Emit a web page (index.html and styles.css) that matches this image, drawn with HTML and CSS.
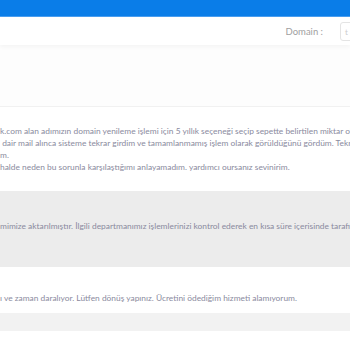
FILE: index.html
```html
<!DOCTYPE html>
<html lang="tr">
<head>
  <meta charset="UTF-8" />
  <meta name="viewport" content="width=device-width, initial-scale=1.0">
  <title>Destek Talebi</title>
  <link rel="stylesheet" href="styles.css">
</head>
<body>

<div class="topbar"></div>

<!-- Üst menü -->
<div class="header">
  <span class="label">Domain :</span>
  <div class="select">t</div>
</div>

<div class="intro"></div>

<!-- Mesajlar -->
<div class="messages">
  <div class="msg">
    <p>k.com alan adımızın domain yenileme işlemi için 5 yıllık seçeneği seçip sepette belirtilen miktar olarak ödeme yaptım.<br>
    &nbsp;dair mail alınca sisteme tekrar girdim ve tamamlanmamış işlem olarak görüldüğünü gördüm. Tekrar ödeme yapmam istendi.<br>
    m.<br>
    halde neden bu sorunla karşılaştığımı anlayamadım. yardımcı oursanız sevinirim.</p>
  </div>
  <div class="msg reply">
    <p>mimize aktarılmıştır. İlgili departmanımız işlemlerinizi kontrol ederek en kısa süre içerisinde tarafınıza dönüş yapacaktır.</p>
  </div>
  <div class="msg late">
    <p>ı ve zaman daralıyor. Lütfen dönüş yapınız. Ücretini ödediğim hizmeti alamıyorum.</p>
  </div>
  <div class="msg reply small"></div>
</div>

</body>
</html>
```

FILE: styles.css
```css
html, body {
  margin: 0;
  padding: 0;
  height: 100%;
  overflow: hidden;
  background: #fff;
  font-family: 'Lato', sans-serif;
}

.topbar {
  height: 16px;
  background: #0a7de8;
  border-bottom: 1px solid #4a9ef0;
}

.header {
  display: flex;
  align-items: center;
  justify-content: flex-end;
  gap: 17px;
  height: 28px;
  background: #fff;
  box-shadow: 0 2px 4px rgba(0,0,0,0.04);
  position: relative;
  overflow: hidden;
}

.label {
  font-size: 9.5px;
  color: #a0a0a0;
}

.select {
  flex-shrink: 0;
  width: 40px;
  height: 19px;
  margin-right: -30px;
  border: 1px solid #e4e4e4;
  border-radius: 3px;
  font-size: 8px;
  color: #ccc;
  padding-left: 4px;
  line-height: 18px;
  box-sizing: border-box;
}

.intro {
  height: 61px;
  background: #fdfdfd;
  border-bottom: 1px solid #f1f1f1;
}

.msg {
  padding: 18px 0;
  overflow: hidden;
}

.msg p {
  margin: 0;
  white-space: nowrap;
  font-size: 8.4px;
  line-height: 12px;
  color: #8a8a9e;
}

.reply {
  background: #ececec;
  padding: 29px 0;
  height: 18px;
}

.late {
  padding: 25px 0 9px;
}

.reply.small {
  background: #f2f2f2;
  height: 18px;
  padding: 0;
}
```
